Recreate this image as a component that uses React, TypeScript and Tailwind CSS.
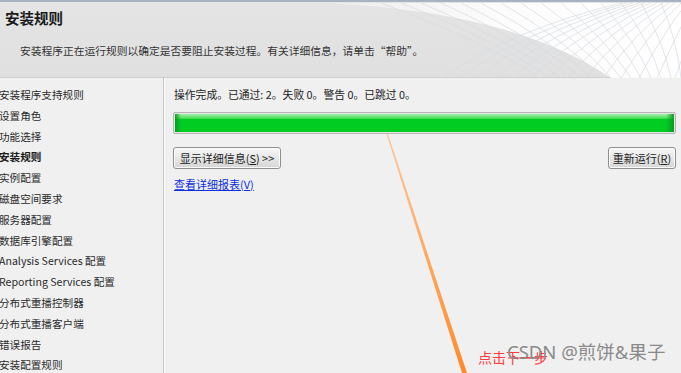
import React from 'react';

const steps = [
  '安装程序支持规则',
  '设置角色',
  '功能选择',
  '安装规则',
  '实例配置',
  '磁盘空间要求',
  '服务器配置',
  '数据库引擎配置',
  'Analysis Services 配置',
  'Reporting Services 配置',
  '分布式重播控制器',
  '分布式重播客户端',
  '错误报告',
  '安装配置规则',
];

const font = { fontFamily: '"Microsoft YaHei", "Noto Sans CJK SC", "Noto Sans", sans-serif' };

// 头部右侧的白色网格装饰
const HeaderMesh = () => (
  <svg className="absolute right-0 top-0 h-[76px] w-[360px]" viewBox="0 0 360 76" preserveAspectRatio="none">
    <defs>
      <linearGradient id="meshFade" x1="0" x2="1" y1="0" y2="0">
        <stop offset="0" stopColor="#ffffff" stopOpacity="0.25" />
        <stop offset="0.5" stopColor="#ffffff" stopOpacity="0.9" />
        <stop offset="1" stopColor="#ffffff" stopOpacity="0.97" />
      </linearGradient>
    </defs>
    <path d="M0 1 C120 6 220 28 290 76 L360 76 L360 1 Z" fill="url(#meshFade)" />
    {Array.from({ length: 16 }).map((_, i) => (
      <path
        key={'a' + i}
        d={`M${60 + i * 20} 1 Q${160 + i * 14} 38 ${220 + i * 10} 76`}
        stroke="#d6dbe1"
        strokeWidth="0.7"
        fill="none"
      />
    ))}
    {Array.from({ length: 16 }).map((_, i) => (
      <path
        key={'b' + i}
        d={`M${120 + i * 18} 76 Q${190 + i * 14} 28 ${300 + i * 6} 1`}
        stroke="#d6dbe1"
        strokeWidth="0.7"
        fill="none"
      />
    ))}
  </svg>
);

const WinButton = ({ children, className = '' }: { children: React.ReactNode; className?: string }) => (
  <div
    className={`flex h-[22px] items-center justify-center rounded-[3px] border border-[#8e8f8f] bg-gradient-to-b from-[#f6f6f6] via-[#e7e7e7] to-[#d6d6d6] text-[11px] text-[#222] shadow-[inset_0_0_0_1px_#fcfcfc] ${className}`}
  >
    {children}
  </div>
);

export default function App() {
  return (
    <div className="relative h-[373px] w-[681px] overflow-hidden bg-[#f0f0f0]" style={font}>
      {/* Header */}
      <div className="relative h-[78px] border-t-2 border-b border-t-[#a7b3c2] border-b-[#cfcfcf] bg-gradient-to-b from-[#e4e4e4] to-[#e0e0e0]">
        <HeaderMesh />
        <div className="relative px-[5px] pt-[6px]">
          <div className="text-[14.5px] font-bold leading-[20px] text-[#1a1a1a]">安装规则</div>
          <div className="mt-[15px] pl-[15px] text-[10.75px] leading-[16px] text-[#333]">
            安装程序正在运行规则以确定是否要阻止安装过程。有关详细信息，请单击“帮助”。
          </div>
        </div>
      </div>

      <div className="flex h-[295px]">
        {/* Sidebar */}
        <div className="w-[164px] shrink-0 border-r border-r-[#c8c8c8] pt-[7px] shadow-[1px_0_0_#ffffff]">
          {steps.map((s, i) => (
            <div
              key={s}
              className={`ml-[-1px] h-[20.8px] whitespace-nowrap text-[10.6px] leading-[20.8px] ${
                i === 3 ? 'font-bold text-[#1a1a1a]' : 'text-[#2a2a2a]'
              }`}
            >
              {s}
            </div>
          ))}
        </div>

        {/* Main */}
        <div className="flex-1 pl-[9px] pr-[5px] pt-[8px]">
          <div className="pl-[1px] text-[10.8px] leading-[16px] text-[#222]">
            操作完成。已通过: 2。失败 0。警告 0。已跳过 0。
          </div>
          <div className="mt-[10px] h-[22px] rounded-[2px] border border-[#b5b5b5] bg-[#e6e6e6] p-[1px]">
            <div className="relative h-full w-full overflow-hidden bg-[#00cc22]">
              <div className="absolute inset-x-0 top-0 h-[5px] bg-gradient-to-b from-[#9ff2a8] to-[#2fd848]" />
              <div className="absolute inset-y-0 left-0 w-[6px] bg-gradient-to-r from-[#0a9a20] to-transparent" />
              <div className="absolute inset-y-0 right-0 w-[8px] bg-gradient-to-l from-[#0a9a20] to-transparent" />
            </div>
          </div>
          <div className="mt-[13px] flex items-start justify-between">
            <div className="flex flex-col">
              <WinButton className="w-[108px]">
                显示详细信息(<span className="underline">S</span>)&nbsp;&gt;&gt;
              </WinButton>
              <a className="mt-[8px] pl-[1px] text-[11px] leading-[14px] text-[#0a2ee0] underline">
                查看详细报表(V)
              </a>
            </div>
            <WinButton className="w-[68px]">
              重新运行(<span className="underline">R</span>)
            </WinButton>
          </div>
        </div>
      </div>

      {/* Annotation: orange arrow line */}
      <svg className="pointer-events-none absolute left-0 top-0 h-[373px] w-[681px]" viewBox="0 0 681 373">
        <defs>
          <linearGradient id="arrowLine" x1="0" y1="0" x2="0" y2="1">
            <stop offset="0" stopColor="#ffc79a" />
            <stop offset="1" stopColor="#ff8a2a" />
          </linearGradient>
        </defs>
        <polygon points="386.5,134 388,134 467,373 462,373" fill="url(#arrowLine)" />
        <line x1="508" y1="358" x2="545" y2="358" stroke="#ff4040" strokeWidth="1" />
      </svg>

      <div className="absolute left-[478px] top-[348px] text-[14px] leading-[18px] text-[#ff3b3b]">
        点击下一步
      </div>
      <div
        className="absolute left-[507px] top-[341px] text-[18.5px] leading-[22px] text-[#8a8a8a]"
        style={{ fontFamily: '"Noto Sans", "Noto Sans CJK SC", sans-serif' }}
      >
        CSDN @煎饼&amp;果子
      </div>
    </div>
  );
}
